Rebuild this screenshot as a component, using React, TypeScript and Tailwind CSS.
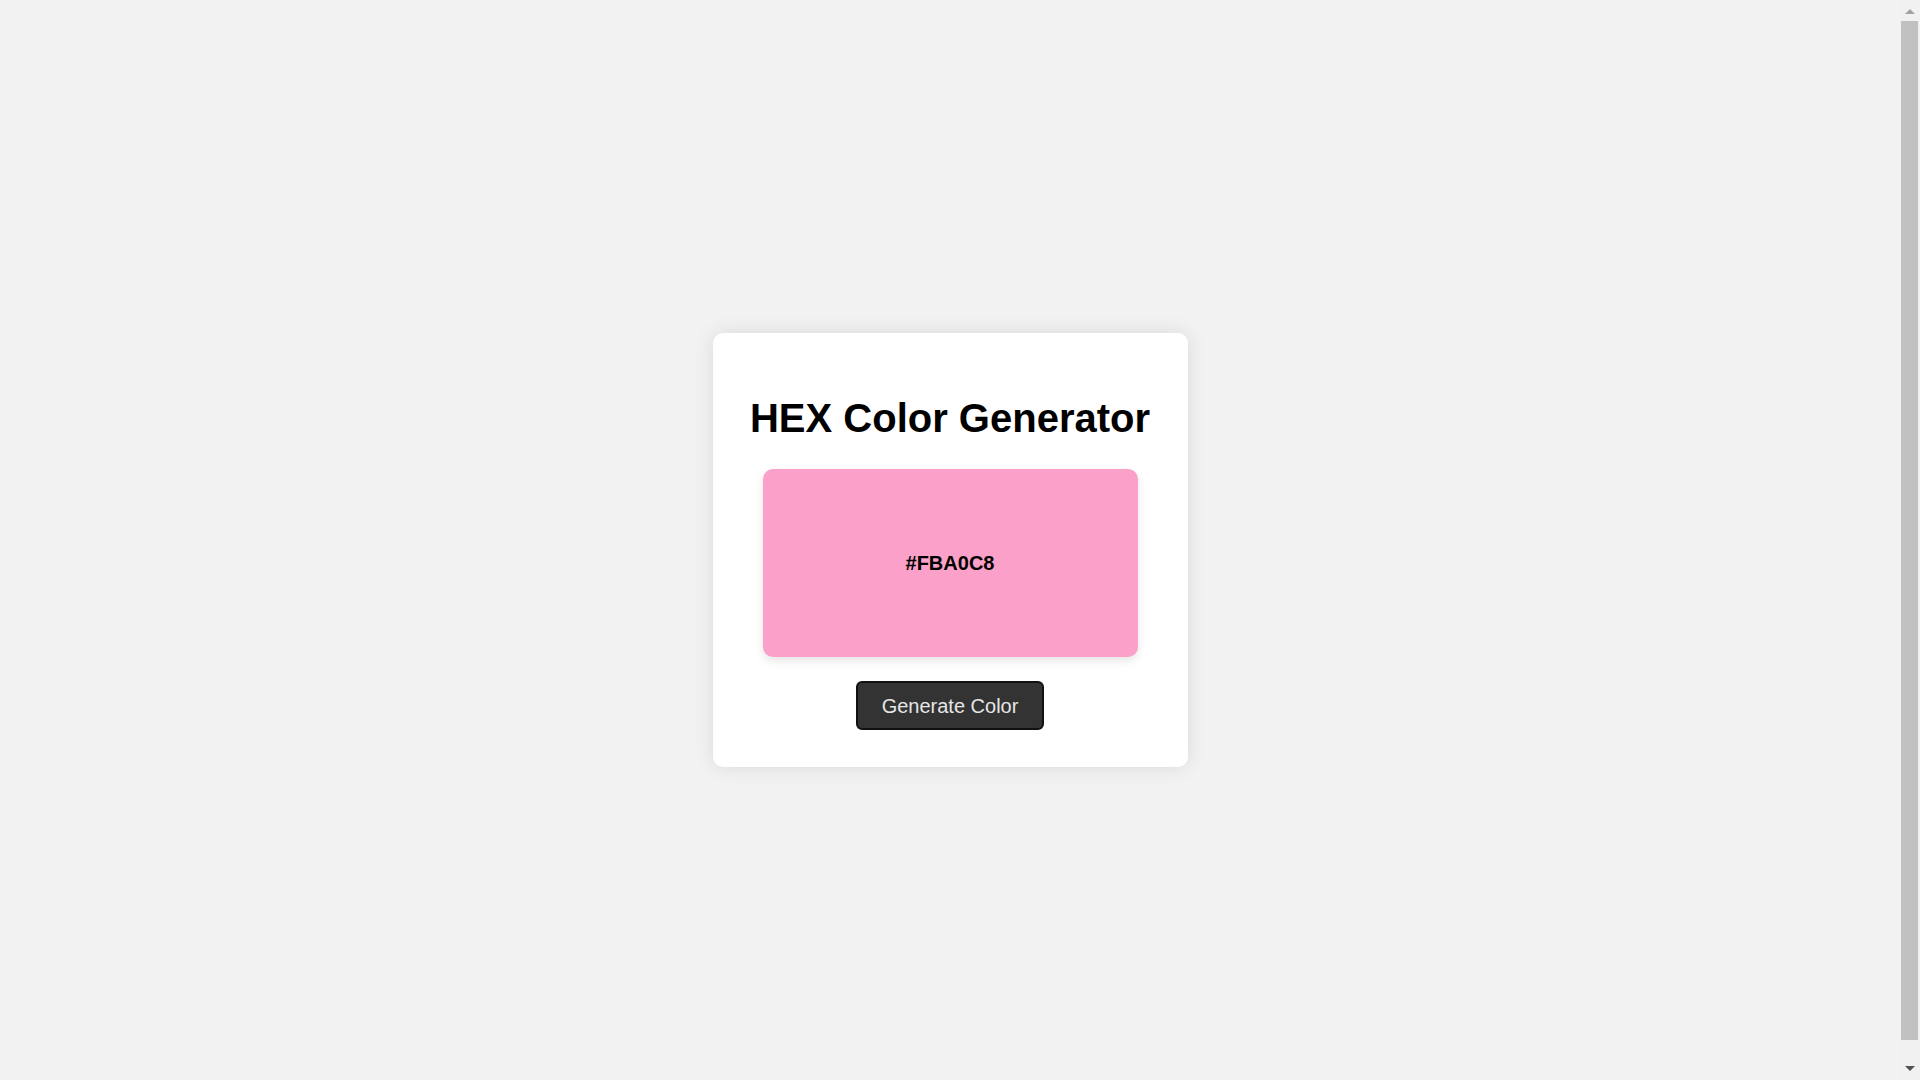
import { useState } from 'react';

const randomHex = () =>
    '#' +
    Math.floor(Math.random() * 0xffffff)
        .toString(16)
        .padStart(6, '0')
        .toUpperCase();

// the browser's scrollbar, drawn by hand since the page itself is only just too tall
function Scrollbar() {
    return (
        <div className="w-[20px] h-full flex flex-col bg-[#f1f1f1]">
            <div className="h-[21px] pt-[9px] pl-[5px]">
                <svg width="10" height="5" viewBox="0 0 10 5">
                    <polygon points="0,5 5,0 10,5" fill="#a3a3a3" />
                </svg>
            </div>
            <div className="ml-[1px] w-[17px] h-[1019px] bg-[#c1c1c1]" />
            <div className="flex-1 pt-[26px] pl-[5px]">
                <svg width="10" height="5" viewBox="0 0 10 5">
                    <polygon points="0,0 10,0 5,5" fill="#505050" />
                </svg>
            </div>
        </div>
    );
}

export default function App() {
    const [color, setColor] = useState('#FBA0C8');

    return (
        <div className="h-screen flex bg-[#f2f2f2] overflow-hidden" style={{ fontFamily: '"Liberation Sans", Arial, sans-serif' }}>
            <div className="flex-1 pt-[20px] flex items-center justify-center">
                <div className="w-[475px] bg-white rounded-[10px] shadow-[0_0_20px_rgba(0,0,0,0.1)] px-[30px] pt-[62px] pb-[37px] flex flex-col items-center">
                    <h1 className="text-[40px] leading-[46px] font-bold text-black whitespace-nowrap text-center">HEX Color Generator</h1>

                    <div
                        className="mt-[28px] w-[375px] h-[188px] rounded-[10px] shadow-[0_4px_10px_rgba(0,0,0,0.1)] flex items-center justify-center"
                        style={{ backgroundColor: color }}
                    >
                        <span className="text-[20px] font-bold text-black">{color}</span>
                    </div>

                    <button
                        onClick={() => setColor(randomHex())}
                        className="mt-[24px] h-[49px] px-[24px] bg-[#333333] border-2 border-[#111111] rounded-[6px] text-[20px] text-[#e6e6e6] cursor-pointer"
                    >
                        Generate Color
                    </button>
                </div>
            </div>
            <Scrollbar />
        </div>
    );
}
